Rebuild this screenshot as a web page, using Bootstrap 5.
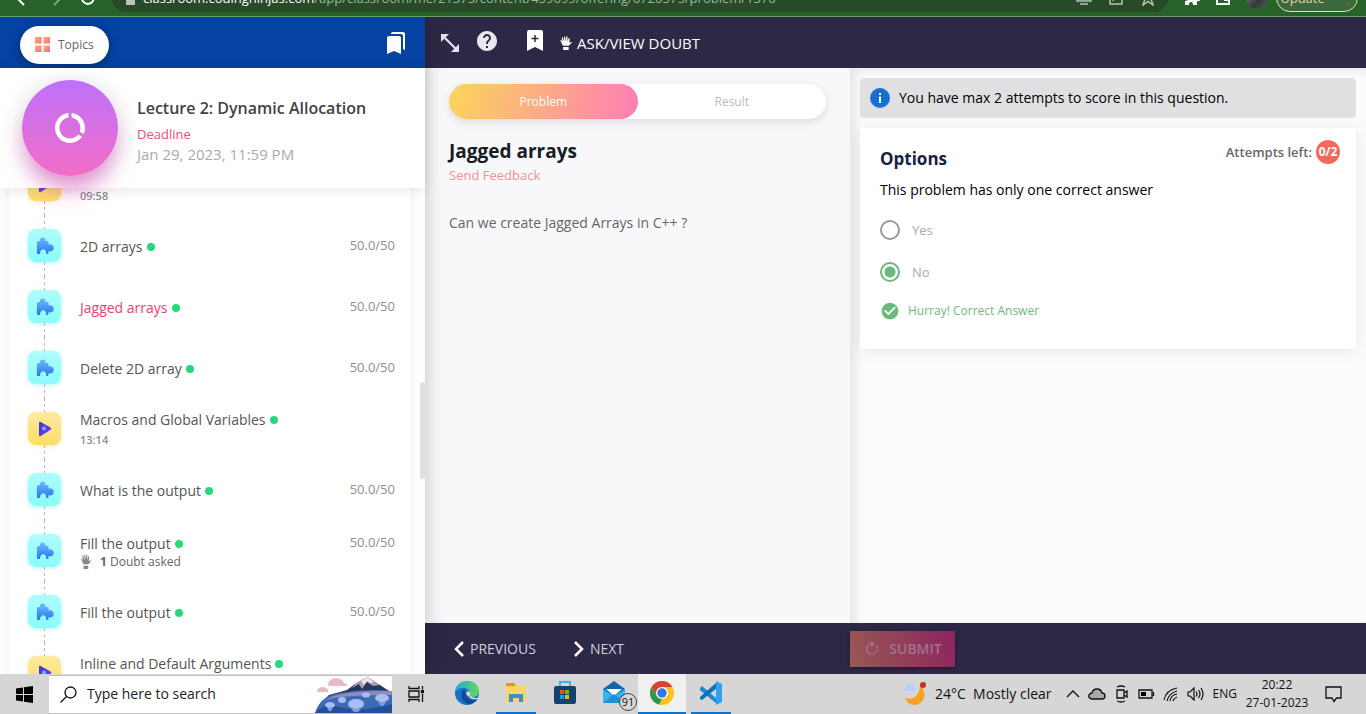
<!DOCTYPE html>
<html lang="en">
<head>
<meta charset="utf-8">
<meta name="viewport" content="width=device-width, initial-scale=1">
<title>Jagged arrays</title>
<link href="https://cdn.jsdelivr.net/npm/bootstrap@5.3.0/dist/css/bootstrap.min.css" rel="stylesheet">
<style>
  body { font-family: "Open Sans", "Noto Sans", sans-serif; font-size: 14px; line-height: 20px; color: #424242; background: #f8f8fb; }
  a { text-decoration: none; }
  button { border: 0; background: none; padding: 0; color: inherit; }
  svg { display: block; flex-shrink: 0; }

  /* browser toolbar */
  .chrome-bar { height: 17px; background: #276329; border-bottom: 1px solid #6f9a70; padding-bottom: 4px; }
  .chrome-bar .tools { height: 28px; }
  .omnibox { background: #274a28; border-radius: 0 0 14px 14px; height: 28px; margin: 0 16px 0 16px; padding: 0 12px 0 14px; font-size: 13px; }
  .omnibox a { color: #9db79e; }
  .omnibox strong { color: #fff; font-weight: 400; }
  .avatar { width: 22px; height: 22px; border-radius: 50%; background: linear-gradient(135deg, #8b9196, #31373a 60%, #59625c); }
  .update-btn { width: 82px; height: 28px; border: 1px solid #e8dcc0; border-radius: 14px; background: #3a6a3b; color: #f0c9b0; font-size: 13px; margin-left: 8px; }

  /* lecture sidebar */
  .side { flex: 0 0 425px; background: #fff; box-shadow: 0 0 18px rgba(0,0,0,.22); z-index: 3; }
  .side-top { height: 51px; background: #0443a2; padding: 0 17px 0 20px; }
  .topics { height: 38px; border-radius: 19px; background: #fff; color: #666; font-size: 12px; padding: 0 15px; box-shadow: 0 2px 12px rgba(0,0,0,.35); }
  .lecture { height: 120px; background: #fff; padding: 0 22px; gap: 19px; box-shadow: 0 2px 12px rgba(0,0,0,.1); z-index: 2; }
  .disc { width: 96px; height: 96px; border-radius: 50%; background: linear-gradient(#be71fa, #f36dc7); box-shadow: 0 18px 24px -6px rgba(226,77,190,.6), 0 4px 24px rgba(0,0,0,.16); color: #fff; }
  .lecture h1 { font-size: 16px; line-height: 24px; font-weight: 600; color: #424242; }
  .due-label { font-size: 13px; color: #ee4f72; line-height: 20px; }
  .due-date { font-size: 15px; color: #aaa; }
  .track { margin: -34px 14px 0 9px; padding: 0 16px 0 19px; box-shadow: 0 0 10px rgba(0,0,0,.08); }
  .step { height: 61px; gap: 19px; }
  .step > .flex-fill { padding-top: 2px; }
  .rail::before, .rail::after { content: ""; flex: 1; width: 1px; background: repeating-linear-gradient(#dfa5ae 0 3px, transparent 3px 6px); }
  .tile { width: 33px; height: 33px; border-radius: 8px; }
  .tile-q { background: linear-gradient(#aefcfb, #8afcfa); box-shadow: 0 1px 4px rgba(100,240,240,.5); }
  .tile-v { background: linear-gradient(#fcea9f, #fddc68); box-shadow: 0 1px 4px rgba(253,220,104,.5); }
  .step a { color: #555; }
  .step a.now { color: #ee3f6f; }
  .done { width: 8px; height: 8px; border-radius: 50%; background: #27d87b; }
  .score { font-size: 13px; line-height: 16px; align-self: flex-start; color: #8e8e8e; }
  .time { font-size: 11px; font-weight: 600; color: #8b8b92; }
  .doubts { font-size: 12px; line-height: 16px; color: #666; }
  .thumb { right: 0; top: 365px; width: 5px; height: 97px; border-radius: 3px; background: #dfdfdf; z-index: 3; }

  /* work area */
  .dark-bar { height: 51px; background: #2c2846; color: #fff; font-size: 15px; }
  .split { display: grid; grid-template-columns: 425fr 516fr; }
  .problem { background: #f8f8fb; padding: 16px 24px; }
  .answer { background: #fbfbfb; padding: 10px; box-shadow: inset 6px 3px 9px rgba(0,0,0,.08); }
  .tabs { background: #fff; border-radius: 18px; box-shadow: 0 3px 10px rgba(0,0,0,.12); }
  .tabs button { height: 35px; border-radius: 18px; font-size: 12px; color: #bbb; }
  .tabs .picked { background: linear-gradient(105deg, #fad659, #fe7db6); color: #fff; }
  .problem h2 { font-size: 19px; line-height: 24px; font-weight: 700; color: #171c24; margin: 20px 0 2px; }
  .feedback { font-size: 13px; color: #f2918f; }
  .ask { font-size: 14px; color: #666; margin-top: 28px; }
  .notice { height: 40px; border-radius: 4px; background: #e0e0e2; color: #000; gap: 9px; padding: 0 10px; }
  .options { background: #fff; margin-top: 10px; padding: 12px 16px 28px 20px; box-shadow: 0 2px 14px rgba(0,0,0,.08); color: #000; }
  .options h3 { font-size: 17px; line-height: 24px; font-weight: 700; color: #172142; margin: 7px 0 9px; }
  .left-label { font-size: 13px; font-weight: 600; color: #666; }
  .left-count { width: 24px; height: 24px; border-radius: 50%; background: #f4695c; color: #fff; font-size: 12px; font-weight: 700; }
  .form-check { min-height: 20px; padding: 0; gap: 12px; margin: 0; }
  .choices { display: grid; gap: 22px; margin: 20px 0 19px; }
  .form-check .form-check-input { width: 20px; height: 20px; margin: 0; float: none; border: 2px solid #999; opacity: 1; }
  .form-check .form-check-input:checked { border-color: #6cba7b; background: radial-gradient(circle, #6cba7b 5px, #fff 6px); }
  .form-check .form-check-label, .form-check .form-check-input:disabled ~ .form-check-label { color: #aaa; opacity: 1; font-size: 13px; }
  .correct { color: #6cba7b; font-size: 12px; gap: 8px; }
  .foot-nav { color: #cfcedb; font-size: 14px; padding-left: 29px; gap: 38px; }
  .foot-nav button { gap: 6px; }
  .submit { width: 105px; height: 36px; background: linear-gradient(75deg, #985953, #8e2460); color: #a2728b; font-weight: 600; font-size: 14px; box-shadow: 0 1px 4px rgba(0,0,0,.4); }

  /* desktop taskbar */
  .taskbar { height: 40px; background: #d6d6d6; color: #111; z-index: 5; }
  .finder { width: 343px; height: 39px; background: #fff; padding-left: 11px; border: 1px solid #c2c2c2; border-width: 1px 0; }
  .finder input { font-size: 14px; color: #222; border: 0; outline: 0; background: none; }
  .finder input::placeholder { color: #222; opacity: 1; }
  .apps { margin-left: 7px; }
  .app { width: 40px; height: 40px; border-bottom: 2px solid transparent; margin-right: 9px; }
  .app.open { border-color: #0a74cf; }
  .app.front { width: 48px; margin: 0 5px 0 -5px; background: #f0f0f0; }
  .mail-count { right: -3px; bottom: 1px; width: 18px; height: 18px; border-radius: 50%; border: 1px solid #444; background: #d8d8d8; font-size: 11px; line-height: 16px; }
  .tray { font-size: 12px; gap: 8px; }
  .weather { font-size: 14px; margin-right: 6px; }
  .clock { width: 64px; line-height: 18px; font-size: 12px; }
</style>
</head>
<body class="vh-100 d-flex flex-column overflow-hidden">

<svg width="0" height="0" class="position-absolute" aria-hidden="true">
  <defs>
    <linearGradient id="blueFade" x1="0" y1="0" x2="0" y2="1"><stop offset="0" stop-color="#6cbdfb"/><stop offset="1" stop-color="#2c74ee"/></linearGradient>
    <linearGradient id="violetFade" x1="0" y1="0" x2="1" y2="1"><stop offset="0" stop-color="#3f39d8"/><stop offset="1" stop-color="#7b35f2"/></linearGradient>
    <linearGradient id="warmFade" x1="0" y1="0" x2="1" y2="1"><stop offset="0" stop-color="#fbb36b"/><stop offset="1" stop-color="#f76a86"/></linearGradient>
    <symbol id="puzzle" viewBox="0 0 18 18"><path fill="url(#blueFade)" d="M2.500 4H4.200C3.300 1.900 4.700.4 6.700.4S10 2 9.300 4H11.300Q12.500 4 12.500 5.200V7.600C14.900 6.700 17.700 7.900 17.700 11S14.800 14.900 12.500 14.100V15.800Q12.500 17 11.300 17H10.300C10.700 10.800 3.800 10.800 4 17H2.200Q.9 17 .9 15.800V5.500Q.9 4 2.500 4Z"/></symbol>
    <symbol id="play" viewBox="0 0 14 16"><path fill="url(#violetFade)" d="M1 2Q1 .3 2.700 1.100L12.600 6.600Q14 7.600 12.600 8.700L2.700 14.900Q1 15.700 1 14Z"/><circle cx="6" cy="7.500" r="1.900" fill="#6bbcff"/></symbol>
    <symbol id="hand" viewBox="0 0 16 16"><path fill="currentColor" d="M4.500 11 1.700 5.600Q1.200 4.300 2.200 4.400L4.300 6.600 3 2Q3.300 1 4.100 1.500L6 6 5.700.9Q6.400.1 7 .9L7.700 6 8.500.7Q9.300 0 9.800 1L9.500 6.300 11 2.600Q12 2.100 12.200 3L11.700 7.800 13.900 6.800Q15.300 6.600 14.700 7.500L11.200 11ZM4.700 12.500H11V16H4.700Z"/></symbol>
  </defs>
</svg>

<header class="chrome-bar flex-shrink-0 overflow-hidden d-flex align-items-end">
  <div class="tools d-flex align-items-center w-100 flex-shrink-0">
    <button aria-label="Back" class="ms-3 text-white"><svg width="16" height="16" viewBox="0 0 16 16" fill="none" stroke="#fff" stroke-width="2"><path d="M8 1 1 8l7 7M1 8h13"/></svg></button>
    <button aria-label="Forward" class="ms-3"><svg width="16" height="16" viewBox="0 0 16 16" fill="none" stroke="#83a584" stroke-width="2"><path d="m6 1 7 7-7 7M13 8H1"/></svg></button>
    <button aria-label="Reload" class="ms-3"><svg width="16" height="16" viewBox="0 0 16 16" fill="none" stroke="#fff" stroke-width="2"><path d="M14 3v4h-4M13.500 10A6 6 0 1 1 12.500 4"/></svg></button>
    <div class="omnibox d-flex align-items-center flex-fill">
      <svg width="9" height="14" viewBox="0 0 9 14"><path fill="#b6c5b6" d="M0 6h9v8H0z"/></svg>
      <a href="#" class="ms-2 text-nowrap"><strong>classroom.codingninjas.com</strong>/app/classroom/me/21375/content/459699/offering/6720575/problem/1376</a>
      <div class="d-flex gap-3 ms-auto">
        <svg width="16" height="16" viewBox="0 0 16 16" fill="none" stroke="#b6c5b6" stroke-width="1.500"><path d="M1 2h14v9H1zM4 14h8"/></svg>
        <svg width="16" height="16" viewBox="0 0 16 16" fill="none" stroke="#b6c5b6" stroke-width="1.500"><path d="M2 2v12h12V8M5 11q1-5 8-5"/></svg>
        <svg width="16" height="16" viewBox="0 0 16 16" fill="none" stroke="#b6c5b6" stroke-width="1.500"><path d="m8 1 2 5h5l-4 3 2 6-5-3.500L3 15l2-6-4-3h5z"/></svg>
      </div>
    </div>
    <button aria-label="Extensions"><svg width="16" height="16" viewBox="0 0 16 16"><path fill="#fff" d="M1 4h4q-1-4 2-4t2 4h4v4q3-1 3 1.500T13 11v4H9q0-3-2-3t-2 3H1v-4q3 0 3-2T1 7z"/></svg></button>
    <button aria-label="Side panel" class="ms-3"><svg width="14" height="14" viewBox="0 0 14 14"><path fill="none" stroke="#fff" stroke-width="2" d="M1 1h12v12H1z"/><path fill="#fff" d="M8 0h6v10H8z"/></svg></button>
    <span class="avatar ms-3"></span>
    <button class="update-btn d-flex align-items-center justify-content-center gap-3 me-2">Update <span class="text-danger">⋮</span></button>
  </div>
</header>

<div class="d-flex flex-fill overflow-hidden">
  <aside class="side position-relative d-flex flex-column">
    <div class="side-top d-flex align-items-center justify-content-between flex-shrink-0">
      <button class="topics d-flex align-items-center gap-2 mt-1">
        <svg width="15" height="15" viewBox="0 0 15 15" fill="url(#warmFade)"><path d="M0 0h6.500v6.500H0z"/><path d="M8.500 0H15v6.500H8.500z"/><path d="M0 8.500h6.500V15H0z"/><path d="M8.500 8.500H15V15H8.500z"/></svg>Topics</button>
      <button aria-label="Bookmarks" class="text-white"><svg width="24" height="24" viewBox="0 0 24 24" fill="currentColor"><path d="M19 18l2 1V3c0-1.100-.9-2-2-2H8.990C7.890 1 7 1.900 7 3h10c1.100 0 2 .9 2 2v13zM15 5H5c-1.100 0-2 .9-2 2v16l7-3 7 3V7c0-1.100-.9-2-2-2z"/></svg></button>
    </div>
    <div class="lecture position-relative d-flex align-items-center flex-shrink-0">
      <div class="disc d-flex align-items-center justify-content-center flex-shrink-0"><svg width="36" height="36" viewBox="0 0 24 24" fill="currentColor"><path d="M13 2.050v3.030c3.390.49 6 3.390 6 6.920 0 .9-.18 1.750-.48 2.540l2.600 1.530c.56-1.240.88-2.620.88-4.070 0-5.180-3.950-9.450-9-9.950zM12 19c-3.870 0-7-3.130-7-7 0-3.530 2.610-6.430 6-6.920V2.050c-5.060.5-9 4.760-9 9.950 0 5.520 4.470 10 9.990 10 3.310 0 6.240-1.610 8.060-4.090l-2.600-1.530C16.170 17.980 14.210 19 12 19z"/></svg></div>
      <div class="pt-1">
        <h1 class="mb-1">Lecture 2: Dynamic Allocation</h1>
        <div class="due-label">Deadline</div>
        <div class="due-date">Jan 29, 2023, 11:59 PM</div>
      </div>
    </div>
    <div class="flex-fill overflow-hidden">
      <ul class="track list-unstyled">
        <li class="step d-flex align-items-stretch">
          <div class="rail d-flex flex-column align-items-center"><span class="tile tile-v d-flex align-items-center justify-content-center"><svg width="14" height="16"><use href="#play"/></svg></span></div>
          <div class="flex-fill align-self-center"><a href="#">Dynamic Memory Allocation of 2D arrays</a><div class="time">09:58</div></div>
        </li>
        <li class="step d-flex align-items-stretch">
          <div class="rail d-flex flex-column align-items-center"><span class="tile tile-q d-flex align-items-center justify-content-center"><svg width="18" height="18"><use href="#puzzle"/></svg></span></div>
          <div class="flex-fill align-self-center d-flex align-items-center gap-1"><a href="#">2D arrays</a><span class="done"></span><span class="score ms-auto">50.0/50</span></div>
        </li>
        <li class="step d-flex align-items-stretch">
          <div class="rail d-flex flex-column align-items-center"><span class="tile tile-q d-flex align-items-center justify-content-center"><svg width="18" height="18"><use href="#puzzle"/></svg></span></div>
          <div class="flex-fill align-self-center d-flex align-items-center gap-1"><a href="#" class="now">Jagged arrays</a><span class="done"></span><span class="score ms-auto">50.0/50</span></div>
        </li>
        <li class="step d-flex align-items-stretch">
          <div class="rail d-flex flex-column align-items-center"><span class="tile tile-q d-flex align-items-center justify-content-center"><svg width="18" height="18"><use href="#puzzle"/></svg></span></div>
          <div class="flex-fill align-self-center d-flex align-items-center gap-1"><a href="#">Delete 2D array</a><span class="done"></span><span class="score ms-auto">50.0/50</span></div>
        </li>
        <li class="step d-flex align-items-stretch">
          <div class="rail d-flex flex-column align-items-center"><span class="tile tile-v d-flex align-items-center justify-content-center"><svg width="14" height="16"><use href="#play"/></svg></span></div>
          <div class="flex-fill align-self-center"><div class="d-flex align-items-center gap-1"><a href="#">Macros and Global Variables</a><span class="done"></span></div><div class="time">13:14</div></div>
        </li>
        <li class="step d-flex align-items-stretch">
          <div class="rail d-flex flex-column align-items-center"><span class="tile tile-q d-flex align-items-center justify-content-center"><svg width="18" height="18"><use href="#puzzle"/></svg></span></div>
          <div class="flex-fill align-self-center d-flex align-items-center gap-1"><a href="#">What is the output</a><span class="done"></span><span class="score ms-auto">50.0/50</span></div>
        </li>
        <li class="step d-flex align-items-stretch">
          <div class="rail d-flex flex-column align-items-center"><span class="tile tile-q d-flex align-items-center justify-content-center"><svg width="18" height="18"><use href="#puzzle"/></svg></span></div>
          <div class="flex-fill align-self-center"><div class="d-flex align-items-center gap-1"><a href="#">Fill the output</a><span class="done"></span><span class="score ms-auto">50.0/50</span></div>
            <div class="doubts d-flex align-items-center gap-2"><svg width="12" height="15" viewBox="0 0 16 16" preserveAspectRatio="none" color="#888"><use href="#hand"/></svg><span><b>1</b> Doubt asked</span></div></div>
        </li>
        <li class="step d-flex align-items-stretch">
          <div class="rail d-flex flex-column align-items-center"><span class="tile tile-q d-flex align-items-center justify-content-center"><svg width="18" height="18"><use href="#puzzle"/></svg></span></div>
          <div class="flex-fill align-self-center d-flex align-items-center gap-1"><a href="#">Fill the output</a><span class="done"></span><span class="score ms-auto">50.0/50</span></div>
        </li>
        <li class="step d-flex align-items-stretch">
          <div class="rail d-flex flex-column align-items-center"><span class="tile tile-v d-flex align-items-center justify-content-center"><svg width="14" height="16"><use href="#play"/></svg></span></div>
          <div class="flex-fill align-self-center"><div class="d-flex align-items-center gap-1"><a href="#">Inline and Default Arguments</a><span class="done"></span></div><div class="time">15:26</div></div>
        </li>
      </ul>
    </div>
    <span class="thumb position-absolute"></span>
  </aside>

  <div class="flex-fill d-flex flex-column">
    <div class="dark-bar d-flex align-items-center flex-shrink-0 px-3">
      <button aria-label="Resize panels" class="me-3"><svg width="18" height="18" viewBox="0 0 18 18" fill="#e3e2ea"><path d="M0 0h8L0 8zM18 18h-8l8-8z"/><path stroke="#e3e2ea" stroke-width="2.200" d="m3 3 12 12"/></svg></button>
      <button aria-label="Help" class="me-4 mb-1"><svg width="24" height="24" viewBox="0 0 24 24" fill="#e9e8ef"><path d="M12 2C6.480 2 2 6.480 2 12s4.480 10 10 10 10-4.480 10-10S17.520 2 12 2zm1 17h-2v-2h2v2zm2.070-7.750l-.9.920C13.450 12.900 13 13.500 13 15h-2v-.5c0-1.100.45-2.100 1.170-2.830l1.240-1.260c.37-.36.59-.86.59-1.410 0-1.100-.9-2-2-2s-2 .9-2 2H8c0-2.210 1.790-4 4-4s4 1.790 4 4c0 .88-.36 1.680-.93 2.250z"/></svg></button>
      <button aria-label="Add bookmark" class="ms-1 me-3 mb-1"><svg width="16" height="21" viewBox="0 0 16 21"><path fill="#fff" d="M2 0h12q2 0 2 2v19l-8-4-8 4V2q0-2 2-2z"/><path stroke="#2c2846" stroke-width="1.500" d="M8 5v7M4.500 8.500h7"/></svg></button>
      <button class="d-flex align-items-center gap-1"><svg width="14" height="14"><use href="#hand"/></svg>ASK/VIEW DOUBT</button>
    </div>
    <div class="flex-fill split">
      <section class="problem">
        <div class="tabs d-flex"><button class="picked w-50">Problem</button><button class="w-50">Result</button></div>
        <h2>Jagged arrays</h2>
        <a href="#" class="feedback d-block">Send Feedback</a>
        <p class="ask">Can we create Jagged Arrays in C++ ?</p>
      </section>
      <section class="answer">
        <div class="notice d-flex align-items-center"><svg width="20" height="20" viewBox="0 0 20 20"><circle cx="10" cy="10" r="10" fill="#1770d1"/><path fill="#fff" d="M9 5h2v2H9zM9 8.500h2V15H9z"/></svg>You have max 2 attempts to score in this question.</div>
        <div class="options">
          <div class="d-flex justify-content-between align-items-start">
            <h3>Options</h3>
            <div class="left-label d-flex align-items-center gap-1">Attempts left: <span class="left-count d-flex align-items-center justify-content-center">0/2</span></div>
          </div>
          <div>This problem has only one correct answer</div>
          <div class="choices">
            <div class="form-check d-flex align-items-center"><input class="form-check-input" type="radio" name="opt" id="yes" disabled><label class="form-check-label" for="yes">Yes</label></div>
            <div class="form-check d-flex align-items-center"><input class="form-check-input" type="radio" name="opt" id="no" checked disabled><label class="form-check-label" for="no">No</label></div>
          </div>
          <div class="correct d-flex align-items-center"><svg width="20" height="20" viewBox="0 0 24 24" fill="currentColor"><path d="M12 2C6.480 2 2 6.480 2 12s4.480 10 10 10 10-4.480 10-10S17.520 2 12 2zm-2 15l-5-5 1.410-1.410L10 14.170l7.590-7.590L19 8l-9 9z"/></svg>Hurray! Correct Answer</div>
        </div>
      </section>
    </div>
    <div class="dark-bar split align-items-center flex-shrink-0">
      <div class="foot-nav d-flex align-items-center">
        <button class="d-flex align-items-center"><svg width="10" height="16" viewBox="0 0 10 16" fill="none" stroke="#fff" stroke-width="2.500"><path d="m9 1-7 7 7 7"/></svg>PREVIOUS</button>
        <button class="d-flex align-items-center"><svg width="10" height="16" viewBox="0 0 10 16" fill="none" stroke="#fff" stroke-width="2.500"><path d="m1 1 7 7-7 7"/></svg>NEXT</button>
      </div>
      <div><button class="submit d-flex align-items-center justify-content-center gap-2"><svg width="18" height="18" viewBox="0 0 24 24" fill="currentColor"><path d="M15.550 5.550L11 1v3.070C7.060 4.560 4 7.920 4 12s3.050 7.440 7 7.930v-2.020c-2.840-.48-5-2.940-5-5.910s2.160-5.430 5-5.910V10l4.550-4.450zM19.930 11c-.17-1.390-.72-2.730-1.620-3.890l-1.420 1.420c.54.75.88 1.600 1.020 2.470h2.020zM13 17.900v2.020c1.390-.17 2.740-.71 3.900-1.610l-1.440-1.440c-.75.54-1.590.89-2.460 1.030zm3.890-2.420l1.420 1.410c.9-1.160 1.450-2.500 1.620-3.890h-2.020c-.14.87-.48 1.720-1.020 2.480z"/></svg>SUBMIT</button></div>
    </div>
  </div>
</div>

<footer class="taskbar flex-shrink-0 d-flex align-items-center">
  <button aria-label="Start" class="mx-3"><svg width="17" height="17" viewBox="0 0 17 17"><path d="M0 2.400 7 1.400V8H0zM8 1.300 17 0v8H8zM0 9h7v6.600L0 14.600zM8 9h9v8l-9-1.300z"/></svg></button>
  <div class="finder d-flex align-items-center">
    <svg width="17" height="17" viewBox="0 0 17 17" fill="none" stroke="#111" stroke-width="1.300"><circle cx="10.500" cy="6.500" r="5.500"/><path d="M6.500 10.500.5 16.500"/></svg>
    <input type="text" class="ms-2 flex-fill" placeholder="Type here to search" aria-label="Search">
    <svg width="77" height="37" viewBox="0 0 77 37">
      <path fill="#e6bcbf" d="M13 9q0-6 8-7 7 1 8 5 6 2 2 3H14zM2 15q1-4 6-4 6 1 5 5H3z"/>
      <path fill="#26345e" d="M14 19 32 14l8-6 12-7 13 8 12 8v10H6z"/><path fill="#a7a0b3" d="m40 8 12-7 13 8-7 1-6-4-5 7-3-5-7 4z"/>
      <path fill="#f1e4e5" d="m46 5 6-4 7 5-4 1-3-2-3 4z"/>
      <path fill="#3b6bb4" d="M0 37q5-17 24-20 27-5 53-2v22z"/><path fill="#8f8bb8" d="M10 24q15-10 67-9v4q-50 0-67 5z"/>
      <path fill="#22509b" d="M0 37q8-10 24-6 20 6 53-3v9z"/>
      <g fill="#a9bdf5"><ellipse cx="41" cy="28" rx="8" ry="5"/><ellipse cx="67" cy="22" rx="7" ry="4"/><ellipse cx="15" cy="29" rx="5" ry="3"/><ellipse cx="27" cy="24" rx="4" ry="3"/><ellipse cx="51" cy="19" rx="4" ry="2.500"/></g>
      <g fill="#7f9cdc"><path d="M36 33h10l-3 3h-4zM63 26h8l-3 4h-2zM12 32h6l-2 3h-2z"/></g>
    </svg>
  </div>
  <button aria-label="Task view" class="mx-3"><svg width="16" height="16" viewBox="0 0 16 16" fill="none" stroke="#111" stroke-width="1.300"><path d="M1 0v2.500h10V0M1 16v-2.500h10V16M1 5h10v6H1zM14.500 0v3M14.500 8v8"/><path fill="#111" d="M13.500 4.500h2v2h-2z"/></svg></button>
  <div class="apps d-flex">
    <button class="app d-flex align-items-center justify-content-center" aria-label="Edge"><svg width="24" height="24" viewBox="0 0 24 24">
      <defs><linearGradient id="eg" x1="0" x2="1"><stop offset="0" stop-color="#25a9de"/><stop offset="1" stop-color="#60d95a"/></linearGradient></defs>
      <circle cx="12" cy="12" r="12" fill="#1672c4"/><path fill="url(#eg)" d="M0 11C1 3 7 0 12 0c8 0 12 5 12 10 0 5-4 7-8 6-3-1-1-2-1-4 0-3-3-5-7-5C4 7 1 9 0 11z"/><path fill="#12499b" d="M9 8c-4 3-4 12 4 15 4 0 8-2 10-6-7 4-13 0-12-5z"/><path fill="#d6d6d6" d="M11 12q1-3 4-1 1 3-1 5 3 4 10 1.500v-1q-5 1-7-.5l-1-1q-4 1-5-3z"/></svg></button>
    <button class="app open d-flex align-items-center justify-content-center" aria-label="Files"><svg width="22" height="20" viewBox="0 0 22 20"><path fill="#dc9a12" d="M1 0h8l2 3v4H1z"/><path fill="#fcd464" d="M1 3h20v16H1z"/><path fill="#3f8fc5" d="M4 11h14v8h-4v-4H8v4H4z"/></svg></button>
    <button class="app d-flex align-items-center justify-content-center" aria-label="Store"><svg width="22" height="24" viewBox="0 0 22 24"><path fill="none" stroke="#38b6e8" stroke-width="2" d="M6 6V1h10v5"/><rect y="5" width="22" height="18" rx="2" fill="#17426f"/><path fill="#f25022" d="M6 9h4v4H6z"/><path fill="#7fba00" d="M11 9h4v4h-4z"/><path fill="#00a4ef" d="M6 14h4v4H6z"/><path fill="#ffb900" d="M11 14h4v4h-4z"/></svg></button>
    <button class="app position-relative d-flex align-items-center justify-content-center" aria-label="Mail"><svg width="24" height="24" viewBox="0 0 24 24"><path fill="#1264ae" d="M1 8 12 0l11 8v8H1z"/><path fill="#fff" d="M4 8h16l-8 7z"/><path fill="#39b3ec" d="M1 8l11 7 11-7v14H1z"/><path fill="#1c91dc" d="m1 22 11-9 11 9z"/></svg><span class="mail-count position-absolute">91</span></button>
    <button class="app open front d-flex align-items-center justify-content-center" aria-label="Chrome"><svg width="24" height="24" viewBox="0 0 24 24"><circle cx="12" cy="12" r="12" fill="#fcc31e"/><path fill="#dc3f33" d="M1.600 6A12 12 0 0 1 22.400 6H12L7 15z"/><path fill="#239b52" d="M1.600 6 6.800 15l5.200 3-3 5.600A12 12 0 0 1 1.600 6z"/><circle cx="12" cy="12" r="6" fill="#fff"/><circle cx="12" cy="12" r="4.700" fill="#2e78e4"/></svg></button>
    <button class="app open d-flex align-items-center justify-content-center" aria-label="Code editor"><svg width="24" height="24" viewBox="0 0 24 24"><path fill="#1b8ad6" d="m1 7 2-2 15 13v5L1 9z"/><path fill="#0f6fb7" d="m1 16 17-15v6L3 19l-2-1z"/><path fill="#2ba3ee" d="m17 0 6 3v18l-6 3z"/></svg></button>
  </div>
  <div class="tray d-flex align-items-center ms-auto">
    <div class="weather d-flex align-items-center gap-2 text-nowrap"><svg width="25" height="24" viewBox="0 0 25 24"><path fill="#f6a228" d="M18 3q6 6 4 13-3 7-10 7-7-1-9-7 14 3 15-13z"/><path fill="#b6d2f7" d="M2 9q-2-4 2-4 1-4 5-3 4 0 4 3 3 1 1 4z"/><circle cx="21" cy="3" r="3" fill="#c9302a"/></svg>24°C&nbsp; Mostly clear</div>
    <button aria-label="Hidden icons"><svg width="14" height="14" viewBox="0 0 14 14" fill="none" stroke="#111" stroke-width="1.400"><path d="m1 10 6-6 6 6"/></svg></button>
    <svg width="18" height="14" viewBox="0 0 18 14"><path fill="#aaa" stroke="#111" stroke-width="1.300" d="M4 12q-4-1-3-4 1-2 3-2 1-4 5-4t5 4q3 0 3 3t-3 3z"/></svg>
    <svg width="16" height="18" viewBox="0 0 16 18" fill="none" stroke="#111" stroke-width="1.300"><path d="M3 5h7v8H3zM10 8l3-2v6l-3-2M3 2q4-2 8 0M3 16q4 2 8 0"/></svg>
    <svg width="17" height="12" viewBox="0 0 17 12"><path fill="none" stroke="#111" stroke-width="1.300" d="M1 2h13v8H1zM15.500 4v4"/><path d="M3 4h5v4H3z"/></svg>
    <svg width="16" height="16" viewBox="0 0 16 16" fill="none" stroke="#111" stroke-width="1.200"><path d="M1 14Q3 4 14 2M4 15Q6 7 14 5M7 15q1-6 7-7M10 15q1-3 4-4"/></svg>
    <svg width="18" height="14" viewBox="0 0 18 14" fill="none" stroke="#111" stroke-width="1.200"><path d="M1 5h2l4-4v12L3 9H1zM9 4.500q2 2.500 0 5M11.500 3q3 4 0 8M14 1q4 6 0 12"/></svg>
    <span>ENG</span>
    <div class="clock text-center text-nowrap">20:22<br>27-01-2023</div>
    <button aria-label="Notifications" class="ms-2 me-4"><svg width="17" height="17" viewBox="0 0 17 17" fill="none" stroke="#111" stroke-width="1.300"><path d="M1 1h15v11h-4.500l-2.500 3.500L7 12H1z"/></svg></button>
  </div>
</footer>

<script src="https://cdn.jsdelivr.net/npm/bootstrap@5.3.0/dist/js/bootstrap.bundle.min.js"></script>
</body>
</html>
